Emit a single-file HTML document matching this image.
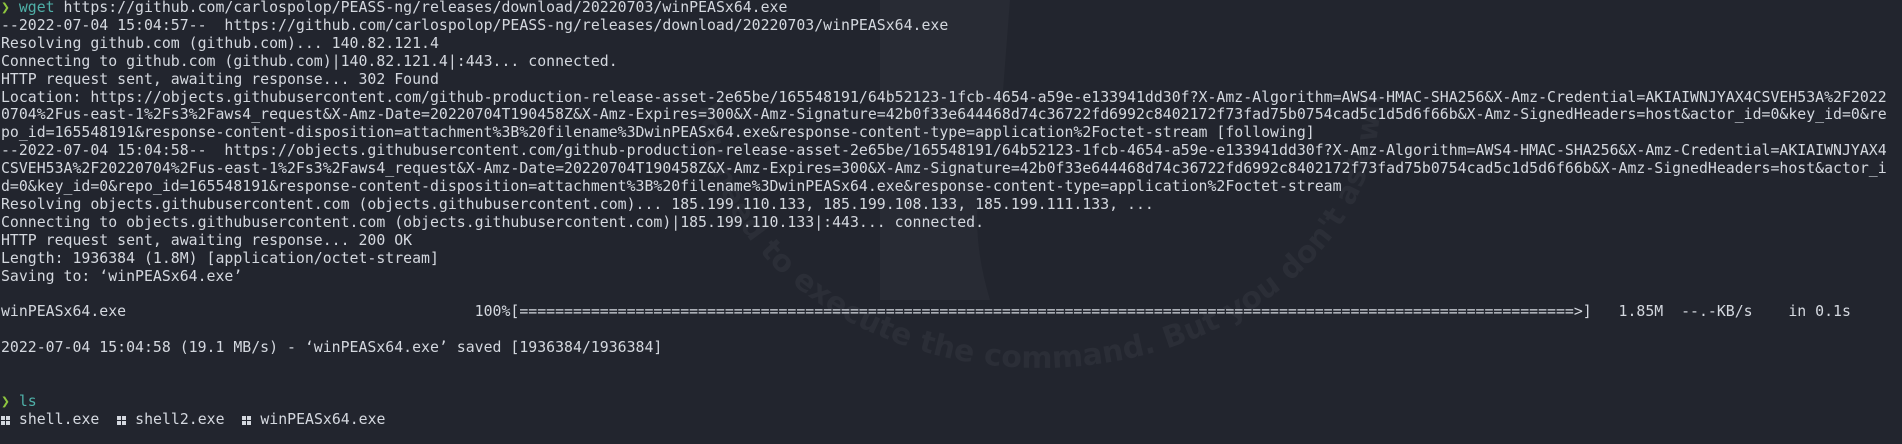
<!DOCTYPE html>
<html><head><meta charset="utf-8"><style>
html,body{margin:0;padding:0;width:1902px;height:444px;overflow:hidden;background:#22252e;}
pre{position:absolute;left:1px;top:-1px;margin:0;font-family:"DejaVu Sans Mono","Liberation Mono",monospace;font-size:14.85px;line-height:17.9px;color:#d4d8df;white-space:pre;}
.g{color:#8ec63f}.t{color:#4fb0a8}
.w{display:inline-block;width:9px;height:9px;vertical-align:-1px;margin-right:0;background:
linear-gradient(#22252e,#22252e) 4px 0/1px 9px no-repeat,linear-gradient(#22252e,#22252e) 0 4px/9px 1px no-repeat,#d4d8df;}
svg{position:absolute;left:0;top:0}
</style></head><body>
<svg width="1902" height="444">
<path d="M880 0 L1010 0 L1000 130 Q960 200 990 300 L880 300 Z" fill="#282b34"/>
<defs><path id="arc" d="M700 100 A 330 260 0 0 0 1380 100"/></defs>
<text font-family="DejaVu Sans" font-size="30" font-weight="bold" fill="#2b2e37"><textPath href="#arc">You need to execute the command. But you don't ask why</textPath></text>
</svg>
<pre><span class="g">❯</span> <span class="t">wget</span> https://github.com/carlospolop/PEASS-ng/releases/download/20220703/winPEASx64.exe
--2022-07-04 15:04:57--  https://github.com/carlospolop/PEASS-ng/releases/download/20220703/winPEASx64.exe
Resolving github.com (github.com)... 140.82.121.4
Connecting to github.com (github.com)|140.82.121.4|:443... connected.
HTTP request sent, awaiting response... 302 Found
Location: https://objects.githubusercontent.com/github-production-release-asset-2e65be/165548191/64b52123-1fcb-4654-a59e-e133941dd30f?X-Amz-Algorithm=AWS4-HMAC-SHA256&amp;X-Amz-Credential=AKIAIWNJYAX4CSVEH53A%2F2022
0704%2Fus-east-1%2Fs3%2Faws4_request&amp;X-Amz-Date=20220704T190458Z&amp;X-Amz-Expires=300&amp;X-Amz-Signature=42b0f33e644468d74c36722fd6992c8402172f73fad75b0754cad5c1d5d6f66b&amp;X-Amz-SignedHeaders=host&amp;actor_id=0&amp;key_id=0&amp;re
po_id=165548191&amp;response-content-disposition=attachment%3B%20filename%3DwinPEASx64.exe&amp;response-content-type=application%2Foctet-stream [following]
--2022-07-04 15:04:58--  https://objects.githubusercontent.com/github-production-release-asset-2e65be/165548191/64b52123-1fcb-4654-a59e-e133941dd30f?X-Amz-Algorithm=AWS4-HMAC-SHA256&amp;X-Amz-Credential=AKIAIWNJYAX4
CSVEH53A%2F20220704%2Fus-east-1%2Fs3%2Faws4_request&amp;X-Amz-Date=20220704T190458Z&amp;X-Amz-Expires=300&amp;X-Amz-Signature=42b0f33e644468d74c36722fd6992c8402172f73fad75b0754cad5c1d5d6f66b&amp;X-Amz-SignedHeaders=host&amp;actor_i
d=0&amp;key_id=0&amp;repo_id=165548191&amp;response-content-disposition=attachment%3B%20filename%3DwinPEASx64.exe&amp;response-content-type=application%2Foctet-stream
Resolving objects.githubusercontent.com (objects.githubusercontent.com)... 185.199.110.133, 185.199.108.133, 185.199.111.133, ...
Connecting to objects.githubusercontent.com (objects.githubusercontent.com)|185.199.110.133|:443... connected.
HTTP request sent, awaiting response... 200 OK
Length: 1936384 (1.8M) [application/octet-stream]
Saving to: ‘winPEASx64.exe’

winPEASx64.exe                                       100%[======================================================================================================================>]   1.85M  --.-KB/s    in 0.1s

2022-07-04 15:04:58 (19.1 MB/s) - ‘winPEASx64.exe’ saved [1936384/1936384]


<span class="g">❯</span> <span class="t">ls</span>
<span class="w"></span> shell.exe  <span class="w"></span> shell2.exe  <span class="w"></span> winPEASx64.exe
</pre>
</body></html>
